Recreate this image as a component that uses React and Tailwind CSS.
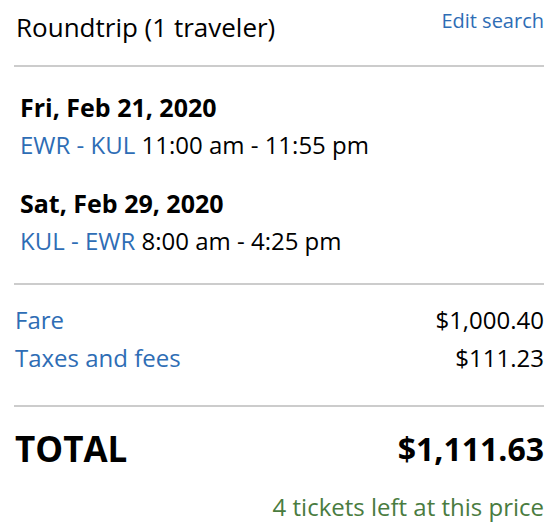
import React from 'react';

const legs = [
    { date: 'Fri, Feb 21, 2020', route: 'EWR - KUL', time: '11:00 am - 11:55 pm' },
    { date: 'Sat, Feb 29, 2020', route: 'KUL - EWR', time: '8:00 am - 4:25 pm' },
];

const charges = [
    { label: 'Fare', amount: '$1,000.40' },
    { label: 'Taxes and fees', amount: '$111.23' },
];

const App = () => {
    return (
        <div className="w-[560px] h-[530px] bg-white pl-[14px] pr-[16px] text-black font-['Open_Sans',sans-serif]">
            {/* header */}
            <div className="flex justify-between items-start h-[67px] border-b-2 border-[#cccccc]">
                <h1 className="mt-[9px] ml-[2px] text-[26px] leading-[36px]">Roundtrip (1 traveler)</h1>
                <a href="#" className="mt-[7px] text-[20px] leading-[28px] text-[#2e6db5]">Edit search</a>
            </div>

            {/* flight legs */}
            <div className="pt-[21px] pb-[23px] pl-[6px] flex flex-col gap-[20px] border-b-2 border-[#cccccc]">
                {legs.map((leg) => (
                    <div key={leg.date}>
                        <div className="text-[25px] leading-[38px] font-bold">{leg.date}</div>
                        <div className="text-[24px] leading-[38px]">
                            <span className="text-[#2e6db5]">{leg.route}</span> {leg.time}
                        </div>
                    </div>
                ))}
            </div>

            {/* fare breakdown */}
            <div className="pt-[16px] pb-[28px] pl-[1px] border-b-2 border-[#cccccc]">
                {charges.map((c) => (
                    <div key={c.label} className="flex justify-between text-[24px] leading-[38px]">
                        <span className="text-[#2e6db5]">{c.label}</span>
                        <span>{c.amount}</span>
                    </div>
                ))}
            </div>

            {/* total */}
            <div className="pt-[20px] pl-[1px]">
                <div className="flex justify-between items-center font-bold leading-[44px]">
                    <span className="text-[35px]">TOTAL</span>
                    <span className="text-[32px]">$1,111.63</span>
                </div>
                <div className="mt-[20px] text-right text-[24px] leading-[32px] text-[#4a7c3f]">
                    4 tickets left at this price
                </div>
            </div>
        </div>
    );
};

export default App;
